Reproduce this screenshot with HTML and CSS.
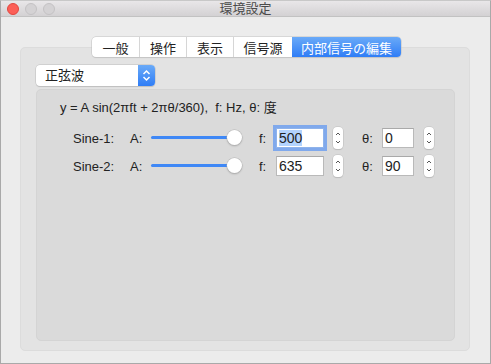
FILE: index.html
```html
<!DOCTYPE html>
<html lang="ja">
<head>
    <meta charset="UTF-8">
    <title>環境設定</title>
    <link rel="stylesheet" href="styles.css">
</head>
<body>
<div class="window">
    <div class="titlebar">
        <div class="lights">
            <span class="light close"></span>
            <span class="light"></span>
            <span class="light"></span>
        </div>
        <div class="title">環境設定</div>
    </div>
    <div class="content">
        <div class="tabs">
            <span class="tab w48">一般</span>
            <span class="tab w47">操作</span>
            <span class="tab w47">表示</span>
            <span class="tab w58">信号源</span>
            <span class="tab active">内部信号の編集</span>
        </div>
        <div class="tabbox">
            <div class="popup">
                <span class="popup-text">正弦波</span>
                <span class="popup-arrow">
                    <svg width="9" height="13" viewBox="0 0 9 13"><path d="M1.5 5 L4.5 2 L7.5 5 M1.5 8 L4.5 11 L7.5 8" fill="none" stroke="#fff" stroke-width="1.5"/></svg>
                </span>
            </div>
            <div class="inner">
                <p class="formula">y = A sin(2πft + 2πθ/360),&nbsp; f: Hz, θ: 度</p>
                <div class="row">
                    <span class="name">Sine-1:</span>
                    <span class="alabel">A:</span>
                    <span class="slider"><span class="track"></span><span class="knob"></span></span>
                    <span class="flabel">f:</span>
                    <span class="field wide focus"><span class="sel">500</span></span>
                    <span class="stepper"><svg width="10" height="22" viewBox="0 0 10 22"><path d="M3 8 L5 6 L7 8 M3 14 L5 16 L7 14" fill="none" stroke="#555" stroke-width="1"/></svg></span>
                    <span class="tlabel">θ:</span>
                    <span class="field narrow">0</span>
                    <span class="stepper"><svg width="10" height="22" viewBox="0 0 10 22"><path d="M3 8 L5 6 L7 8 M3 14 L5 16 L7 14" fill="none" stroke="#555" stroke-width="1"/></svg></span>
                </div>
                <div class="row">
                    <span class="name">Sine-2:</span>
                    <span class="alabel">A:</span>
                    <span class="slider"><span class="track"></span><span class="knob"></span></span>
                    <span class="flabel">f:</span>
                    <span class="field wide">635</span>
                    <span class="stepper"><svg width="10" height="22" viewBox="0 0 10 22"><path d="M3 8 L5 6 L7 8 M3 14 L5 16 L7 14" fill="none" stroke="#555" stroke-width="1"/></svg></span>
                    <span class="tlabel">θ:</span>
                    <span class="field narrow">90</span>
                    <span class="stepper"><svg width="10" height="22" viewBox="0 0 10 22"><path d="M3 8 L5 6 L7 8 M3 14 L5 16 L7 14" fill="none" stroke="#555" stroke-width="1"/></svg></span>
                </div>
            </div>
        </div>
    </div>
</div>
</body>
</html>
```

FILE: styles.css
```css
* {
    margin: 0;
    padding: 0;
    box-sizing: border-box;
}

body {
    font-family: "Liberation Sans", "Noto Sans CJK JP", sans-serif;
    font-size: 13px;
    color: #222;
    background: #fff;
}

.window {
    width: 491px;
    height: 364px;
    border: 1px solid #a9a9a9;
    border-top-color: #c8c8c8;
    background: #ececec;
    overflow: hidden;
}

.titlebar {
    position: relative;
    height: 16px;
    background: linear-gradient(#e9e7e9, #d3d1d3);
    border-bottom: 1px solid #c2c2c2;
    display: flex;
    align-items: center;
    justify-content: center;
}

.lights {
    position: absolute;
    left: 6px;
    top: 2px;
    display: flex;
    gap: 6px;
}

.light {
    width: 12px;
    height: 12px;
    border-radius: 50%;
    background: #d4d2d4;
    border: 1px solid #c4c2c4;
}

.light.close {
    background: #fc5f57;
    border-color: #e2463f;
}

.title {
    font-size: 13px;
    color: #4b4b4b;
    line-height: 16px;
}

.content {
    padding: 20px 20px 0 19px;
}

.tabs {
    position: relative;
    z-index: 1;
    display: flex;
    width: 309px;
    height: 20px;
    margin: 0 0 -10px 72px;
    background: #fff;
    border-radius: 4px;
    box-shadow: 0 0 0 0.5px #c2c2c2, 0 1px 1px rgba(0, 0, 0, 0.12);
}

.tab {
    display: flex;
    align-items: center;
    justify-content: center;
    height: 20px;
    border-right: 1px solid #d6d6d6;
    color: #222;
}

.w48 { width: 48px; }
.w47 { width: 47px; }
.w58 { width: 58px; border-right: none; }

.tab.active {
    flex: 1;
    border-right: none;
    color: #fff;
    background: linear-gradient(#6aaaf8, #2f7df6);
    border-radius: 0 4px 4px 0;
}

.tabbox {
    width: 450px;
    height: 304px;
    background: #e3e3e3;
    border: 1px solid #dcdcdc;
    border-radius: 5px;
    padding: 17px 14px 8px 15px;
}

.popup {
    display: flex;
    width: 119px;
    height: 21px;
    background: #fff;
    border-radius: 4px;
    box-shadow: 0 0 0 0.5px #bdbdbd, 0 1px 1px rgba(0, 0, 0, 0.15);
    overflow: hidden;
}

.popup-text {
    flex: 1;
    padding-left: 9px;
    line-height: 21px;
}

.popup-arrow {
    width: 17px;
    display: flex;
    align-items: center;
    justify-content: center;
    background: linear-gradient(#6aaaf8, #2f7df6);
}

.inner {
    margin-top: 3px;
    height: 252px;
    background: #dadada;
    border: 1px solid #d4d4d4;
    border-radius: 5px;
    padding: 10px 0 0 23px;
}

.formula {
    line-height: 16px;
    color: #222;
    margin-bottom: 12px;
}

.row {
    display: flex;
    align-items: center;
    height: 20px;
    margin: 0 0 8px 13px;
}

.name { width: 57px; }
.alabel { width: 21px; }
.flabel { width: 17px; }
.tlabel { width: 20px; }

.slider {
    position: relative;
    width: 91px;
    height: 20px;
    margin-right: 17px;
}

.track {
    position: absolute;
    left: 0;
    right: 8px;
    top: 8px;
    height: 3px;
    border-radius: 2px;
    background: #3f88f6;
}

.knob {
    position: absolute;
    right: 0;
    top: 2px;
    width: 15px;
    height: 15px;
    border-radius: 50%;
    background: #fff;
    box-shadow: 0 0 0 0.5px #b5b5b5, 0 1px 2px rgba(0, 0, 0, 0.25);
}

.field {
    height: 20px;
    background: #fff;
    border: 1px solid #b9b9b9;
    border-top-color: #a9a9a9;
    padding-left: 2px;
    line-height: 18px;
    font-size: 14px;
}

.field.wide {
    width: 48px;
    margin-right: 9px;
}

.field.narrow {
    width: 32px;
    margin-right: 10px;
}

.field.focus {
    border-color: #8fb3ea;
    box-shadow: 0 0 0 3px #80a9ec;
}

.sel {
    background: #b3d3fd;
}

.stepper {
    display: flex;
    width: 10px;
    height: 22px;
    margin-right: 19px;
    background: #fff;
    border-radius: 4px;
    box-shadow: 0 0 0 0.5px #bdbdbd, 0 1px 1px rgba(0, 0, 0, 0.15);
}
```
